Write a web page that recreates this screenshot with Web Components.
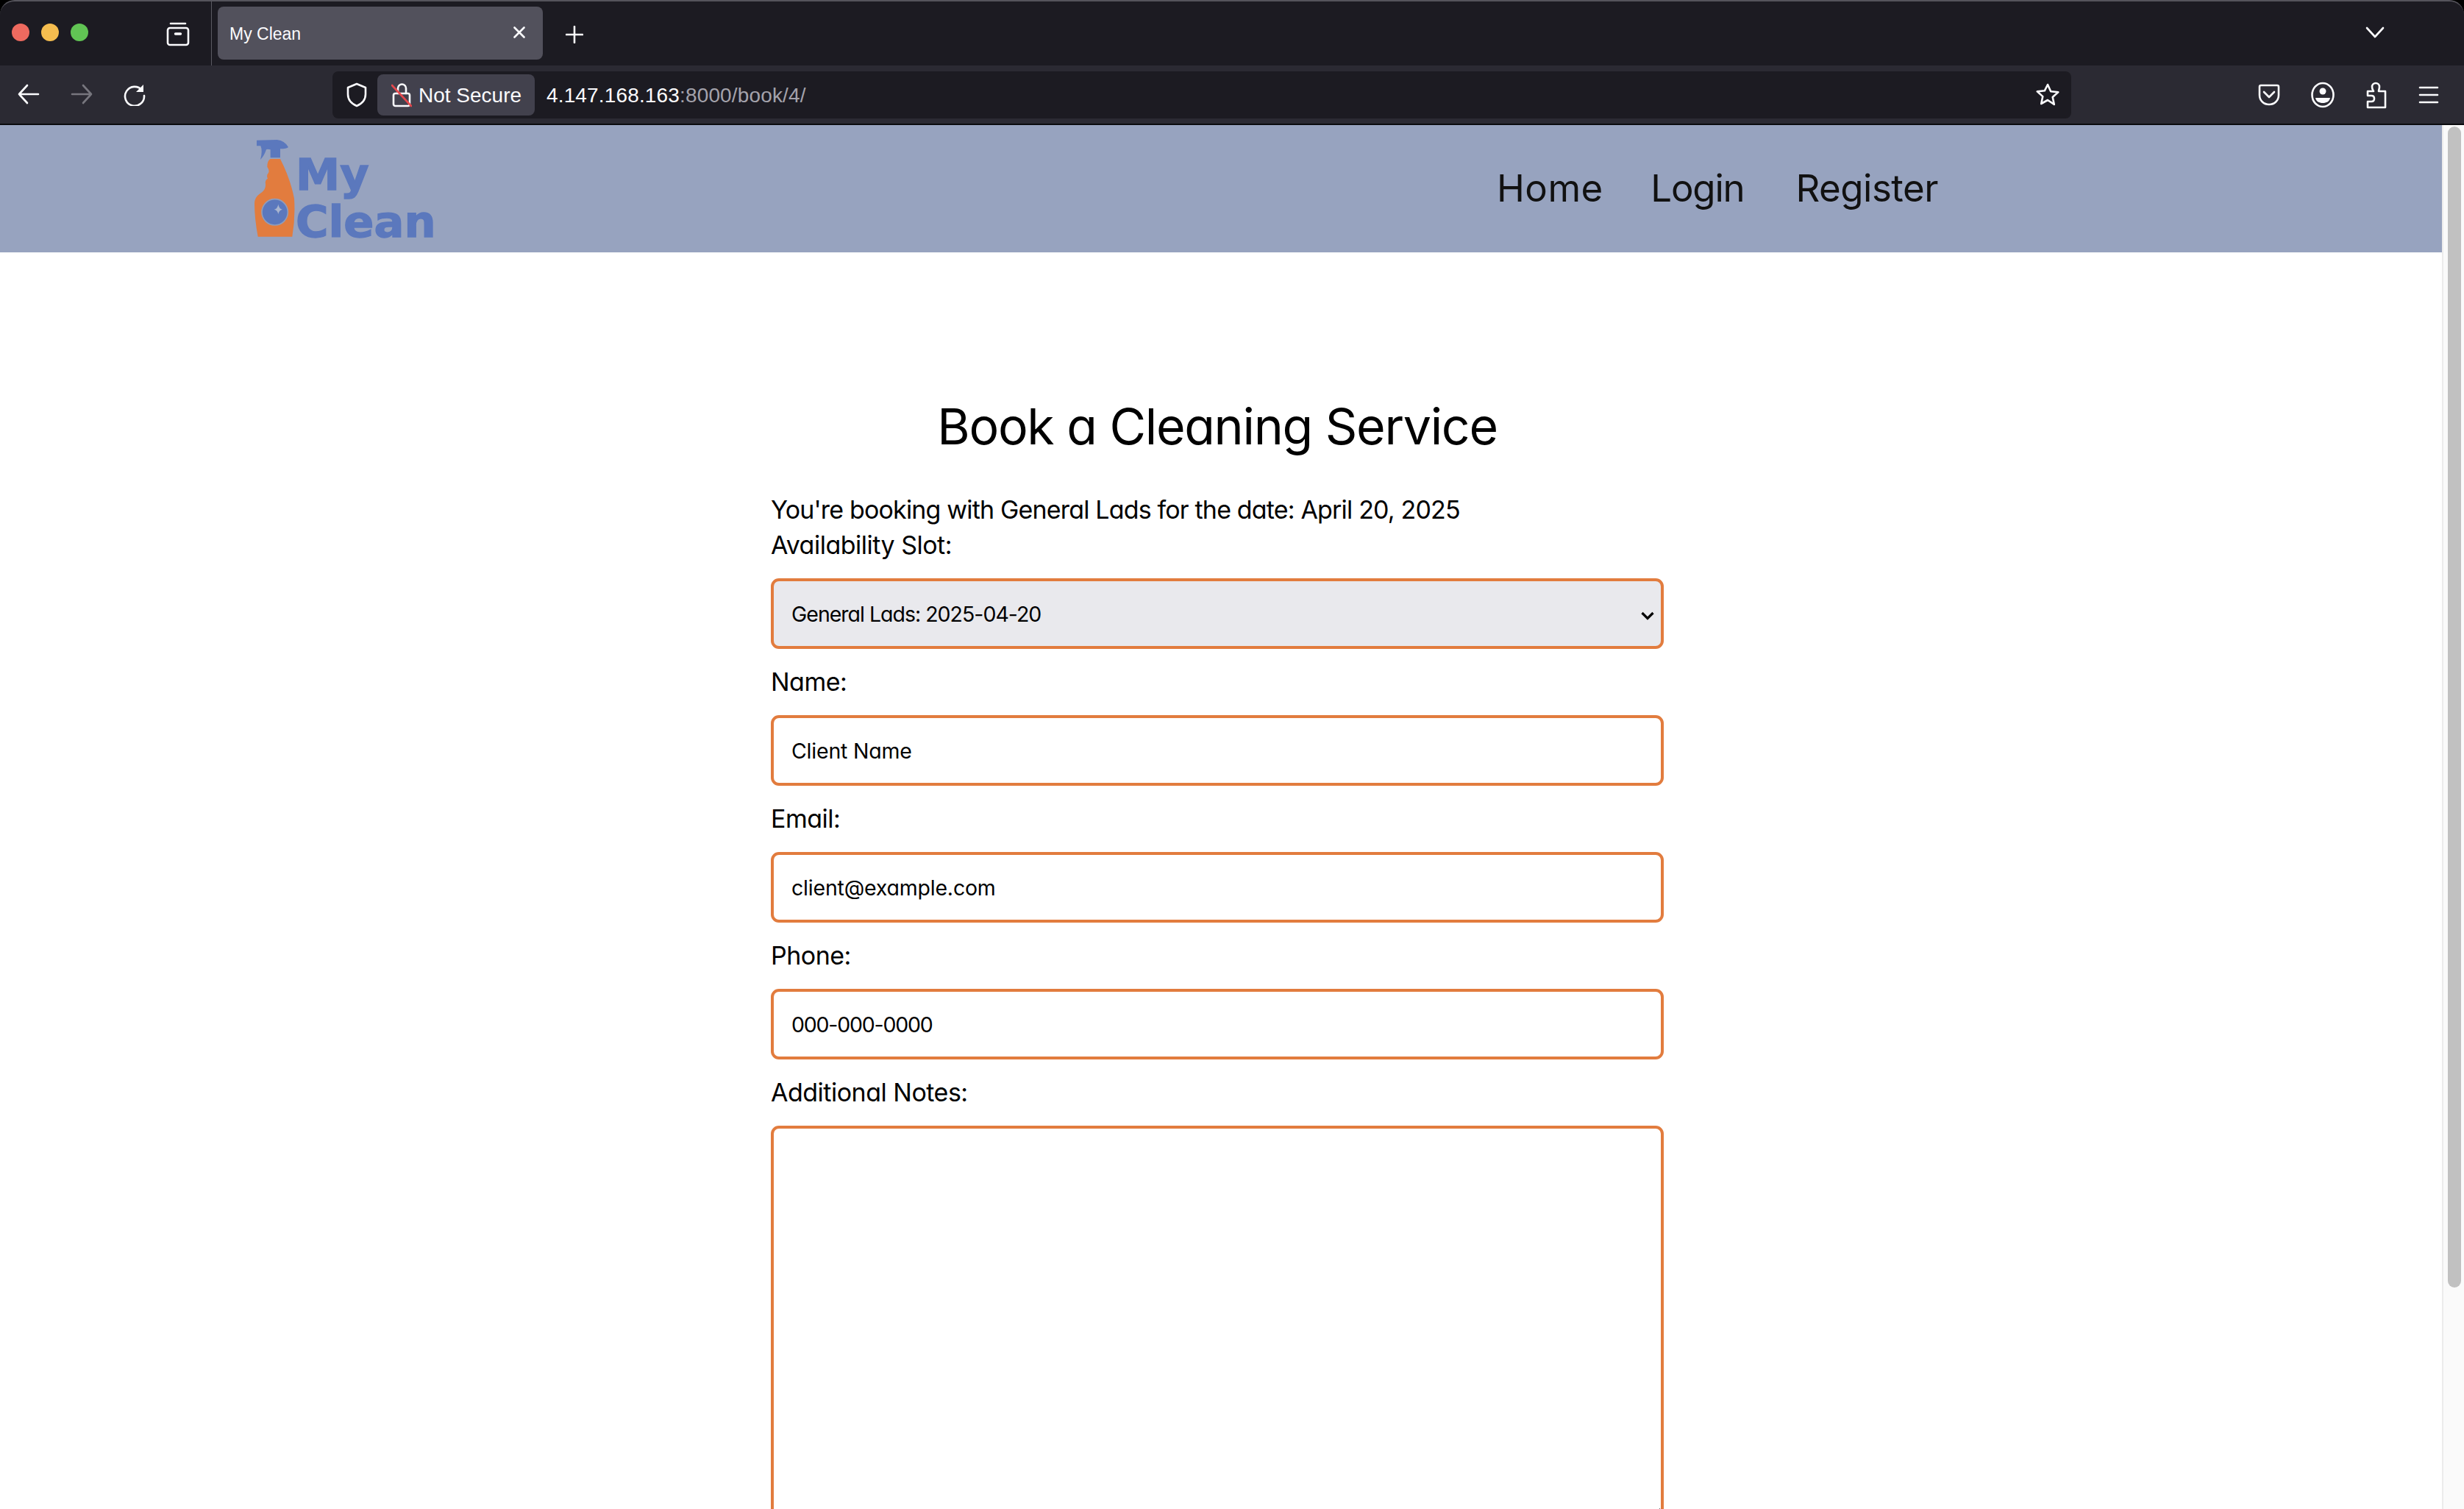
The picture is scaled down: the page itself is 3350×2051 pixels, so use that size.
<!DOCTYPE html>
<html lang="en">
<head>
<meta charset="utf-8">
<title>My Clean</title>
<style>
  html, body { margin: 0; padding: 0; height: 2051px; overflow: hidden; background: #fff; }
  my-app { height: 2051px; }
</style>
</head>
<body>
<my-app></my-app>
<script>
(function () {
  var BODY_FONT = "Inter,'Open Sans',sans-serif";
  var UI_FONT = "'Liberation Sans',Arial,sans-serif";

  function define(name, html) {
    customElements.define(name, class extends HTMLElement {
      constructor() {
        super();
        this.attachShadow({ mode: "open" }).innerHTML = html;
      }
    });
  }

  var ICON = 'fill="none" stroke="#fbfbfe" stroke-width="2.6" stroke-linecap="round" stroke-linejoin="round"';

  define("tab-strip",
    '<style>' +
    ':host{display:flex;align-items:stretch;height:89px;box-sizing:border-box;background:#1c1b22;border-top:2px solid #55545c;border-radius:20px 20px 0 0;font-family:' + UI_FONT + ';color:#fbfbfe}' +
    '.lights{display:flex;gap:16px;align-items:center;padding:0 0 4px 16px;width:146px;box-sizing:content-box;flex:none}' +
    '.lights i{width:24px;height:24px;border-radius:50%}' +
    '.view{display:flex;align-items:center;justify-content:center;width:32px;margin:0 29px 0 64px;flex:none}' +
    '.sep{width:1px;background:#5a5962;flex:none}' +
    '.tab{display:flex;align-items:center;justify-content:space-between;box-sizing:border-box;width:442px;height:72px;margin:7px 0 0 8px;padding:2px 24px 0 16px;background:#52515c;border-radius:8px;font-size:23px;flex:none}' +
    '.tab svg{margin-top:-4px}' +
    '.plus{margin:2px 0 0 31px;align-self:center;flex:none;display:flex}' +
    '.more{margin:0 108px 0 auto;align-self:center;display:flex;padding-bottom:3px}' +
    '</style>' +
    '<div class="lights"><i style="background:#ee6a5f"></i><i style="background:#f5bd4f"></i><i style="background:#61c454"></i></div>' +
    '<div class="view"><svg width="32" height="34" viewBox="0 0 32 34" ' + ICON + '><path d="M6 3h20"/><rect x="2" y="9" width="28" height="23" rx="3"/><path d="M12.5 17h7" stroke-width="3.4"/></svg></div>' +
    '<div class="sep"></div>' +
    '<div class="tab"><span>My Clean</span><svg width="16" height="16" viewBox="0 0 16 16" ' + ICON + '><path d="M1.5 1.5l13 13M14.5 1.5l-13 13"/></svg></div>' +
    '<div class="plus"><svg width="24" height="24" viewBox="0 0 24 24" ' + ICON + '><path d="M12 1v22M1 12h22"/></svg></div>' +
    '<div class="more"><svg width="26" height="16" viewBox="0 0 26 16" ' + ICON + '><path d="M2 2l11 12L24 2"/></svg></div>');

  define("url-bar",
    '<style>' +
    ':host{display:flex;align-items:center;box-sizing:border-box;width:2364px;height:64px;background:#1c1b22;border-radius:8px;font-family:' + UI_FONT + ';color:#fbfbfe;font-size:28px;flex:none}' +
    '.shield{display:flex;margin:0 13px 0 18px}' +
    '.secure{display:flex;align-items:center;box-sizing:border-box;width:214px;height:56px;background:#42414d;border-radius:8px;padding-left:19px;gap:9px;flex:none}' +
    '.secure span{padding-top:2px;white-space:nowrap}' +
    '.url{margin-left:16px;padding-top:2px;letter-spacing:.15px}.url span{color:#a3a2ab}' +
    '.star{margin:0 16px 0 auto;display:flex}' +
    '</style>' +
    '<div class="shield"><svg width="30" height="34" viewBox="0 0 30 34" ' + ICON + '><path d="M15 2l12 5v9c0 8-5 13-12 16C8 29 3 24 3 16V7z"/></svg></div>' +
    '<div class="secure"><svg width="28" height="34" viewBox="0 0 28 34" ' + ICON + '><path d="M9 15V8a5.5 5.5 0 0 1 11 0v7"/><rect x="3" y="15" width="22" height="17" rx="2.5"/><path d="M1 4l26 28" stroke="#e5484d"/></svg><span>Not Secure</span></div>' +
    '<div class="url">4.147.168.163<span>:8000/book/4/</span></div>' +
    '<div class="star"><svg width="32" height="32" viewBox="0 0 32 32" ' + ICON + '><path d="M16 2l4.2 9.2 10 1.1-7.5 6.7 2.1 9.9L16 23l-8.8 5 2.1-9.9-7.5-6.7 10-1.1z"/></svg></div>');

  define("nav-toolbar",
    '<style>' +
    ':host{display:flex;align-items:center;box-sizing:border-box;height:81px;background:#2b2a33;border-bottom:2px solid #0b0b0e}' +
    '.btns{display:flex;width:452px;flex:none;padding-left:24px;box-sizing:border-box;gap:42px}' +
    '.right{display:flex;gap:42px;margin-left:254px;align-items:center}' +
    '.right svg{display:block}' +
    '</style>' +
    '<div class="btns">' +
    '<svg width="30" height="28" viewBox="0 0 30 28" ' + ICON + '><path d="M28 14H2M13 2L2 14l11 12"/></svg>' +
    '<svg width="30" height="28" viewBox="0 0 30 28" ' + ICON + ' style="stroke:#77767e"><path d="M2 14h26M17 2l11 12-11 12"/></svg>' +
    '<svg width="30" height="30" viewBox="0 0 30 30" ' + ICON + '><path d="M25 8.5A13 13 0 1 0 28 16"/><path d="M27 1v10H17z" fill="#fbfbfe" stroke="none"/></svg>' +
    '</div>' +
    '<url-bar></url-bar>' +
    '<div class="right">' +
    '<svg width="30" height="32" viewBox="0 0 30 32" ' + ICON + '><path d="M4 3h22a2 2 0 0 1 2 2v11c0 8-6 13-13 13S2 24 2 16V5a2 2 0 0 1 2-2z"/><path d="M8 12l7 7 7-7"/></svg>' +
    '<svg width="32" height="36" viewBox="0 0 32 36" ' + ICON + '><ellipse cx="16" cy="18" rx="14.5" ry="16"/><circle cx="16" cy="13" r="4.5" fill="#fbfbfe" stroke="none"/><path d="M6 22h20c-1 5-5 7-10 7s-9-2-10-7z" fill="#fbfbfe" stroke="none"/></svg>' +
    '<svg width="30" height="38" viewBox="0 0 30 38" ' + ICON + '><path d="M3 14h8c-1-2-2-3-2-6a5 5 0 0 1 10 0c0 3-1 4-1 6h9v22H3v-8h5c3 0 4-2 4-4s-1-4-4-4H3z"/></svg>' +
    '<svg width="28" height="26" viewBox="0 0 28 26" ' + ICON + '><path d="M2 3h24M2 13h24M2 23h24"/></svg>' +
    '</div>');

  define("browser-chrome",
    '<style>:host{display:block;flex:none;background:#000}</style><tab-strip></tab-strip><nav-toolbar></nav-toolbar>');

  define("site-logo",
    '<style>:host{display:block;width:340px;height:173px;flex:none}svg{display:block}text{font-family:"DejaVu Sans",sans-serif;font-weight:700;font-size:176px;fill:#5b78bd;stroke:#5b78bd;stroke-width:4}</style>' +
    '<svg width="340" height="173" viewBox="0 0 1020 519">' +
    '<path fill="#5b78bd" d="M147 62L230 60Q262 64 276 90Q270 97 243 97L243 133L203 133L203 100Q190 96 186 100Q178 125 162 141Q172 105 163 85L147 85Z"/>' +
    '<path fill="#e27c3e" d="M203 138L243 138Q285 220 300 300Q305 380 292 455L152 455Q138 380 138 320Q138 295 160 280Q185 265 183 240Q180 225 192 218Q185 205 195 195Q200 185 190 170Q190 145 203 138Z"/>' +
    '<circle cx="221" cy="355" r="53" fill="#5b78bd" stroke="#8f9dbb" stroke-width="5"/>' +
    '<path fill="#a9b5cf" d="M235 323Q238 341 252 344Q238 347 235 363Q232 347 218 344Q232 341 235 323Z"/>' +
    '<text x="306" y="265" textLength="299" lengthAdjust="spacingAndGlyphs">My</text>' +
    '<text x="306" y="455" textLength="572" lengthAdjust="spacingAndGlyphs">Clean</text>' +
    '</svg>');

  define("site-nav",
    '<style>' +
    ':host{display:flex;align-items:center;box-sizing:border-box;height:173px;padding:0 685px 0 300px;background:#97a3bf;font-family:' + BODY_FONT + ';font-feature-settings:"cv11";font-size:51px;color:#111}' +
    'nav{display:flex;margin-left:auto;margin-top:-3px}' +
    'a{color:inherit;text-decoration:none}' +
    'a:nth-child(1){letter-spacing:.5px;margin-right:64.5px}' +
    'a:nth-child(2){letter-spacing:-1.2px;margin-right:70px}' +
    'a:nth-child(3){letter-spacing:-.5px}' +
    '</style>' +
    '<site-logo></site-logo><nav><a href="#">Home</a><a href="#">Login</a><a href="#">Register</a></nav>');

  define("form-label",
    '<style>:host{display:block;height:48px;line-height:48px;font-size:34px;letter-spacing:-.5px;color:#000}</style><slot></slot>');

  define("field-box",
    '<style>' +
    ':host{display:flex;align-items:center;position:relative;box-sizing:border-box;height:96px;margin:21px 0;padding:0 24px;border:4px solid #e27c3e;border-radius:11px;background:#fff;font-size:28.5px;color:#000}' +
    ':host([kind=select]){background:#e9e9ed}' +
    'svg{position:absolute;right:9px;top:41px;display:none}' +
    ':host([kind=select]) svg{display:block}' +
    '</style><slot></slot>' +
    '<svg width="18" height="12" viewBox="0 0 18 12" fill="none" stroke="#000" stroke-width="3.2"><path d="M1.5 2L9 9.5 16.5 2"/></svg>');

  define("notes-box",
    '<style>:host{display:block;margin-top:21px}' +
    'textarea{display:block;box-sizing:border-box;width:100%;height:532px;padding:24px;border:4px solid #e27c3e;border-radius:11px;background:#fff;outline:none;margin:0}</style>' +
    '<textarea aria-label="Additional Notes"></textarea>');

  define("booking-form",
    '<style>' +
    ':host{display:block;width:1214px;margin-left:1048px;padding-top:188px;font-family:' + BODY_FONT + ';font-feature-settings:"cv11";color:#000}' +
    'h2{margin:0 0 42px;height:96px;line-height:96px;text-align:center;font-size:68px;font-weight:400;letter-spacing:-1.3px}' +
    'p{margin:0;height:48px;line-height:48px;font-size:34px;letter-spacing:-.83px}' +
    '</style>' +
    '<h2>Book a Cleaning Service</h2>' +
    '<p>You\'re booking with General Lads for the date: April 20, 2025</p>' +
    '<form-label>Availability Slot:</form-label>' +
    '<field-box kind="select" style="letter-spacing:-1px">General Lads: 2025-04-20</field-box>' +
    '<form-label>Name:</form-label>' +
    '<field-box style="letter-spacing:-.2px">Client Name</field-box>' +
    '<form-label>Email:</form-label>' +
    '<field-box style="letter-spacing:-.2px">client@example.com</field-box>' +
    '<form-label>Phone:</form-label>' +
    '<field-box style="letter-spacing:-1.2px">000-000-0000</field-box>' +
    '<form-label>Additional Notes:</form-label>' +
    '<notes-box></notes-box>');

  define("page-scrollbar",
    '<style>' +
    ':host{display:block;box-sizing:border-box;width:30px;flex:none;background:#fafafa;border-left:2px solid #ececec;padding:2px 4px 0 6px}' +
    'div{height:1578px;background:#c1c1c1;border-radius:9px}' +
    '</style><div></div>');

  define("my-app",
    '<style>' +
    ':host{display:flex;flex-direction:column;width:3350px;overflow:hidden;background:#000}' +
    '.view{display:flex;flex:1;min-height:0;background:#fff}' +
    'main{flex:1;min-width:0;overflow:hidden}' +
    '</style>' +
    '<browser-chrome></browser-chrome>' +
    '<div class="view"><main><site-nav></site-nav><booking-form></booking-form></main><page-scrollbar></page-scrollbar></div>');
})();
</script>
</body>
</html>
